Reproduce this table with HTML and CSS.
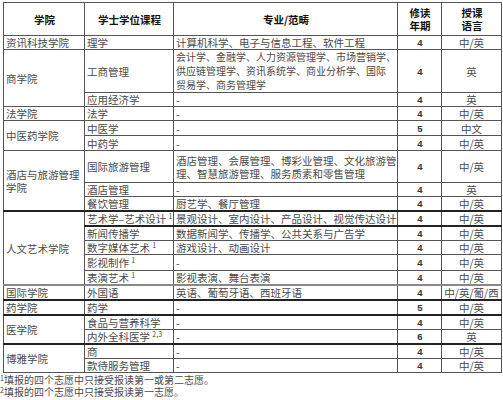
FILE: index.html
```html
<!DOCTYPE html>
<html lang="zh-CN">
<head>
<meta charset="utf-8">
<link rel="stylesheet" href="styles.css">
</head>
<body>
<table class="grid">
  <colgroup>
    <col class="c-college"><col class="c-course"><col class="c-major"><col class="c-years"><col class="c-lang">
  </colgroup>
  <thead>
    <tr class="h34">
      <th>学院</th><th>学士学位课程</th><th>专业/范畴</th><th>修读<br>年期</th><th>授课<br>语言</th>
    </tr>
  </thead>
  <tbody>
    <tr class="h14"><td>资讯科技学院</td><td>理学</td><td>计算机科学、电子与信息工程、软件工程</td><td class="n">4</td><td class="l">中/英</td></tr>
    <tr class="h44"><td rowspan="2">商学院</td><td>工商管理</td><td class="tight">会计学、金融学、人力资源管理学、市场营销学、<br>供应链管理学、资讯系统学、商业分析学、国际<br>贸易学、商务管理学</td><td class="n">4</td><td class="l">英</td></tr>
    <tr class="h14"><td>应用经济学</td><td>-</td><td class="n">4</td><td class="l">英</td></tr>
    <tr class="h15"><td>法学院</td><td>法学</td><td>-</td><td class="n">4</td><td class="l">中/英</td></tr>
    <tr class="h16"><td rowspan="2">中医药学院</td><td>中医学</td><td>-</td><td class="n">5</td><td class="l">中文</td></tr>
    <tr class="h16"><td>中药学</td><td>-</td><td class="n">4</td><td class="l">中/英</td></tr>
    <tr class="h33"><td rowspan="3" class="wrap">酒店与旅游管理学院</td><td>国际旅游管理</td><td>酒店管理、会展管理、博彩业管理、文化旅游管<br>理、智慧旅游管理、服务质素和零售管理</td><td class="n">4</td><td class="l">中/英</td></tr>
    <tr class="h14"><td>酒店管理</td><td>-</td><td class="n">4</td><td class="l">英</td></tr>
    <tr class="h15"><td>餐饮管理</td><td>厨艺学、餐厅管理</td><td class="n">4</td><td class="l">中/英</td></tr>
    <tr class="h14 tk"><td rowspan="5">人文艺术学院</td><td>艺术学–艺术设计 <sup>1</sup></td><td>景观设计、室内设计、产品设计、视觉传达设计</td><td class="n">4</td><td class="l">中/英</td></tr>
    <tr class="h13 tk"><td>新闻传播学</td><td>数据新闻学、传播学、公共关系与广告学</td><td class="n">4</td><td class="l">中/英</td></tr>
    <tr class="h14"><td>数字媒体艺术 <sup>1</sup></td><td>游戏设计、动画设计</td><td class="n">4</td><td class="l">中/英</td></tr>
    <tr class="h17"><td>影视制作 <sup>1</sup></td><td>-</td><td class="n">4</td><td class="l">中/英</td></tr>
    <tr class="h15"><td>表演艺术 <sup>1</sup></td><td>影视表演、舞台表演</td><td class="n">4</td><td class="l">中/英</td></tr>
    <tr class="h13 tg"><td>国际学院</td><td>外国语</td><td>英语、葡萄牙语、西班牙语</td><td class="n">4</td><td class="l">中/英/葡/西</td></tr>
    <tr class="h14 tk"><td>药学院</td><td>药学</td><td>-</td><td class="n">5</td><td class="l">中/英</td></tr>
    <tr class="h14 tk"><td rowspan="2">医学院</td><td>食品与营养科学</td><td>-</td><td class="n">4</td><td class="l">中/英</td></tr>
    <tr class="h14"><td>内外全科医学 <sup>2,3</sup></td><td>-</td><td class="n">6</td><td class="l">英</td></tr>
    <tr class="h13 tk"><td rowspan="2">博雅学院</td><td>商</td><td>-</td><td class="n">4</td><td class="l">中/英</td></tr>
    <tr class="h15"><td>款待服务管理</td><td>-</td><td class="n">4</td><td class="l">中/英</td></tr>
  </tbody>
</table>
<div class="notes">
  <p class="fn"><sup>1</sup>填报的四个志愿中只接受报读第一或第二志愿。</p>
  <p class="fn"><sup>2</sup>填报的四个志愿中只接受报读第一志愿。</p>
</div>
</body>
</html>
```
FILE: styles.css
```css
html, body {
  margin: 0;
  padding: 0;
  background: #ffffff;
}
body {
  padding: 2px 0 0 3px;
  font-family: "Noto Sans CJK SC", "Noto Sans", sans-serif;
  font-size: 10.5px;
  color: #4a4a4a;
}
.grid {
  border-collapse: collapse;
  table-layout: fixed;
  width: 498px;
}
.c-college { width: 81px; }
.c-course { width: 89px; }
.c-major { width: 224px; }
.c-years { width: 44px; }
.c-lang { width: 60px; }

.grid th, .grid td {
  border: 1px solid #555;
  padding: 0 1px 0 2px;
  line-height: 13px;
  vertical-align: middle;
  text-align: left;
  white-space: nowrap;
  overflow: visible;
}
.grid td.wrap { white-space: normal; }
.grid th {
  font-weight: 700;
  color: #111;
  text-align: center;
  line-height: 13px;
}
.grid td.n {
  text-align: center;
  font-family: "Liberation Sans", Arial, sans-serif;
  font-weight: 700;
  font-size: 9.5px;
  color: #333;
}
.grid td.l { text-align: center; padding: 0; }
.grid td.tight { font-size: 10px; line-height: 14px; }
.grid sup {
  font-size: 7px;
  line-height: 0;
  vertical-align: 4px;
}
.tk > td { border-top: 2px solid #222; }
.tg > td { border-top: 2px solid #888; }

.h13 > * { height: 11px; }
.h14 > * { height: 12px; }
.h15 > * { height: 13px; }
.h16 > * { height: 14px; }
.h17 > * { height: 15px; }
.h33 > * { height: 31px; }
.h34 > * { height: 32px; }
.h44 > * { height: 42px; }
.tk.h13 > * { height: 10px; }
.tk.h14 > * { height: 11px; }
.tg.h13 > * { height: 10px; }

.notes {
  margin: 1px 0 0 -3px;
}
.fn {
  margin: 0;
  line-height: 12px;
  font-size: 10px;
  color: #4a4a4a;
}
.fn sup {
  font-size: 7px;
  line-height: 0;
  vertical-align: 3px;
}
```
